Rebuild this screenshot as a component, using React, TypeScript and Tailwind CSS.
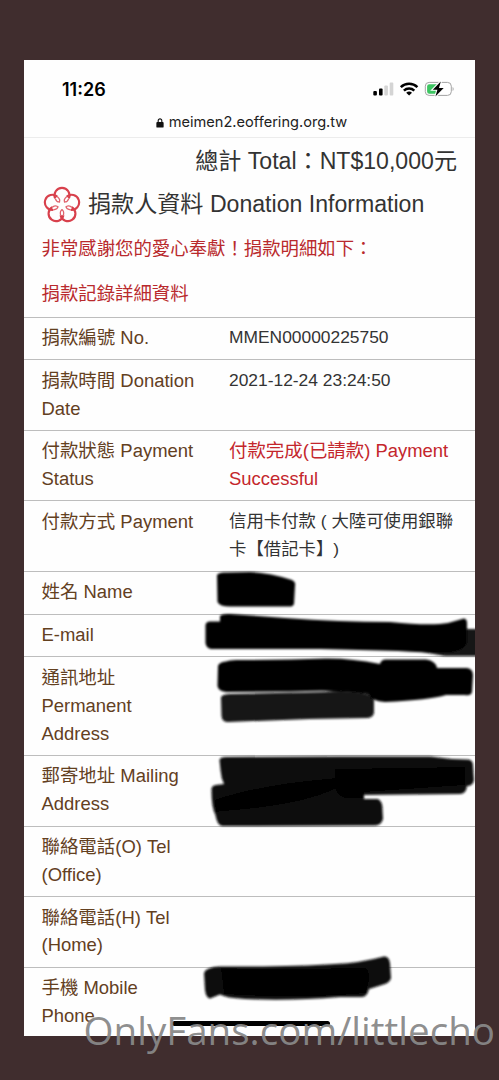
type Row = {
  label: string
  value?: string
  tone?: 'alert'
}

const rows: Row[] = [
  { label: '捐款編號 No.', value: 'MMEN00000225750' },
  { label: '捐款時間 Donation\nDate', value: '2021-12-24 23:24:50' },
  { label: '付款狀態 Payment\nStatus', value: '付款完成(已請款) Payment\nSuccessful', tone: 'alert' },
  { label: '付款方式 Payment', value: '信用卡付款 ( 大陸可使用銀聯\n卡【借記卡】)' },
  { label: '姓名 Name' },
  { label: 'E-mail' },
  { label: '通訊地址\nPermanent\nAddress' },
  { label: '郵寄地址 Mailing\nAddress' },
  { label: '聯絡電話(O) Tel\n(Office)' },
  { label: '聯絡電話(H) Tel\n(Home)' },
  { label: '手機 Mobile\nPhone' },
]

function StatusIcons() {
  return (
    <svg width="82" height="18" viewBox="372 80 82 18" className="block">
      <rect x="373.3" y="91" width="3.6" height="4.5" rx="1" />
      <rect x="379" y="88.5" width="3.6" height="7" rx="1" />
      <rect x="384.3" y="85.5" width="3.6" height="10" rx="1" fill="#d4d4d4" />
      <rect x="389.7" y="82.5" width="3.6" height="13" rx="1" fill="#d4d4d4" />
      <g fill="none" stroke="#000" strokeWidth="2.5">
        <path d="M400.8 87.2a12 12 0 0 1 16.6 0" />
        <path d="M403.9 90.6a7.5 7.5 0 0 1 10.4 0" />
      </g>
      <path d="M406.2 92.7a4.3 4.3 0 0 1 5.8 0L409.1 95.6z" />
      <rect x="425.3" y="82.4" width="26" height="13" rx="3.8" fill="#fff" stroke="#a3a3a3" strokeWidth="1" />
      <path d="M429.3 84.2H437v9.6h-7.7a2.2 2.2 0 0 1-2.2-2.2v-5.2a2.2 2.2 0 0 1 2.2-2.2z" fill="#3dc562" />
      <path d="M452.6 87c1.4.6 1.4 3.4 0 4z" fill="#a3a3a3" />
      <path
        d="M440.8 81.5l-8 8.2h4.6l-2 6.8 8.3-8.4h-4.7z"
        stroke="#fff"
        strokeWidth="2.2"
        paintOrder="stroke"
      />
    </svg>
  )
}

function PlumLogo() {
  return (
    <svg width="38" height="38" viewBox="-20.5 -21 41 41" fill="none" className="mt-[2px] shrink-0">
      {[0, 72, 144, 216, 288].map((angle) => (
        <g key={angle} transform={`rotate(${angle})`}>
          <path d="M-7.4 -7.6A8.1 8.1 0 1 1 7.4 -7.6" stroke="#d8404c" strokeWidth="2.3" />
          <path d="M-7.4 -7.6C-6.2 -4.8-4 -3.4-2.2 -4" stroke="#e0646e" strokeWidth="1.4" />
          <path d="M7.4 -7.6C6.2 -4.8 4 -3.4 2.2 -4" stroke="#e0646e" strokeWidth="1.4" />
        </g>
      ))}
    </svg>
  )
}

// Marker strokes drawn over the private fields
function Redactions() {
  return (
    <svg
      width="451"
      height="976"
      viewBox="24 60 451 976"
      className="pointer-events-none absolute left-0 top-0"
    >
      <defs>
        <filter id="soft" x="-5%" y="-10%" width="110%" height="120%">
          <feGaussianBlur stdDeviation="0.8" />
        </filter>
      </defs>
      <g filter="url(#soft)" stroke="none">
        <path d="M217 575Q219 572 226 572.5L250 572Q270 573 292 580Q296 582 295 586L294 604Q293 607 288 606.5H232Q220 607 217.5 602z" fill="#000" />
        <path d="M460 629H480V656H445L410 650z" fill="#151515" />
        <path d="M220 616Q222 613.5 230 614L285 618Q340 622 390 622Q430 626 448 623L464 618.5Q467 619 467 623V642Q465 650 450 652.5Q430 653 398 651L320 649H211Q206 648 205.5 643V625Q206 621.5 210 621.5H220z" fill="#010101" />
        <path d="M218 666Q219 662 226 661.5Q230 659.5 240 660Q290 660 325 658.5Q350 658 380 664Q381 659 387 659.5H426Q436 661 437 668L467 668Q473 669 473 675L472 692Q471 696 465 695H446Q430 700 385 702Q372 701 368 694Q340 689 290 691.5L226 692Q218 691 217.5 686z" fill="#000" />
        <path d="M221 697Q223 694 230 694L325 692Q350 689 370 695L374 700V712Q374 717 368 718L310 719L228 722Q222 722 221.5 716z" fill="#121212" />
        <path d="M371 694h7v5h-7z" fill="#000" />
        <path d="M219.5 760Q220 757 226 757L340 756.5H430L452 759L468 759.5Q473 760 473 765L474 780Q473 786 467 786Q466 794 460 794L364 795V799L378 799Q383 802 382.5 810L383 819Q381 825.5 375 825.5L222 826Q217 825 215.5 815Q211.5 808 211.5 790Q211 786 216 785L224 784Q221 778 220.5 770z" fill="#101010" />
        <path d="M335 769L465 767V785L364 792V798H345Q335 794 335 785z" fill="#010101" />
        <path d="M214 800Q260 784 335 778V789Q300 806 216 812z" fill="#050505" />
        <path d="M204 973Q206 967 220 966.5Q290 967 335 964Q360 963 384 956.5Q389 956 390 963L391 978Q390 982 385 984L369 989Q367 997 362 997L340 997Q290 1001 245 999Q226 998 220 994.5L210 998.5Q206 998 205 990z" fill="#111" />
        <path d="M221 968Q300 970 340 968H365Q370 970 369 980L366 993Q300 999 224 994z" fill="#000" />
      </g>
    </svg>
  )
}

export default function App() {
  return (
    <div className="relative h-[1080px] w-[499px] overflow-hidden bg-[#402d2e] px-6 pt-[60px] font-['Liberation_Sans','Noto_Sans_CJK_TC',sans-serif] [text-spacing-trim:space-all]">
      <main className="relative h-[976px] w-[451px] overflow-hidden bg-[#fefefe] text-[#333]">
        <header className="h-[78px] border-b border-[#ececec] pt-[18px] font-['Inter',sans-serif] text-black">
          <div className="flex h-[22px] items-center justify-between pl-[38px] pr-[21px]">
            <span className="pt-px text-[18px] font-semibold leading-[22px]">11:26</span>
            <StatusIcons />
          </div>
          <div className="mt-[13px] flex h-[20px] items-center justify-center gap-[5px] pl-[4px] text-[14.6px] text-[#222]">
            <svg width="8" height="10" viewBox="0 0 8 11">
              <path d="M2 5V3a2 2 0 0 1 4 0v2" fill="none" stroke="#111" strokeWidth="1.2" />
              <rect x="0" y="4.5" width="8" height="6" rx="1" fill="#111" />
            </svg>
            <span>meimen2.eoffering.org.tw</span>
          </div>
        </header>

        <p className="h-[46px] whitespace-nowrap pr-[18px] text-right text-[23.1px] leading-[47px]">
          總計 Total：NT$10,000元
        </p>
        <h1 className="flex h-[40px] items-center gap-[7.5px] whitespace-nowrap pl-[18.5px] text-[23.1px]">
          <PlumLogo />
          捐款人資料 Donation Information
        </h1>
        <div className="h-[92.6px] pl-[17.5px] pt-[1.8px] text-[18.4px] leading-[45px] text-[#b92a2d]">
          <p>非常感謝您的愛心奉獻！捐款明細如下：</p>
          <p>捐款記錄詳細資料</p>
        </div>

        <dl>
          {rows.map((row) => (
            <div
              key={row.label}
              className="flex whitespace-pre border-t border-[#bdbdbd] pb-[7.4px] pt-[6.4px] text-[18.45px] leading-[27.9px]"
            >
              <dt className="w-[188px] shrink-0 pl-[17.5px] text-[#63401f]">{row.label}</dt>
              <dd className={row.tone === 'alert' ? 'pl-[17px] text-[#c4262c]' : 'pl-[17px] text-[17.4px]'}>
                {row.value}
              </dd>
            </div>
          ))}
        </dl>

        <Redactions />
        <div className="absolute left-[148px] top-[961px] h-[5px] w-[158px] rounded-full bg-black" />
      </main>

      <div className="absolute left-[83.5px] top-[1004px] whitespace-nowrap font-['Open_Sans','Noto_Sans',sans-serif] text-[38.6px] leading-[52px] text-[#888888]/95">
        OnlyFans.com/littlecho
      </div>
    </div>
  )
}
